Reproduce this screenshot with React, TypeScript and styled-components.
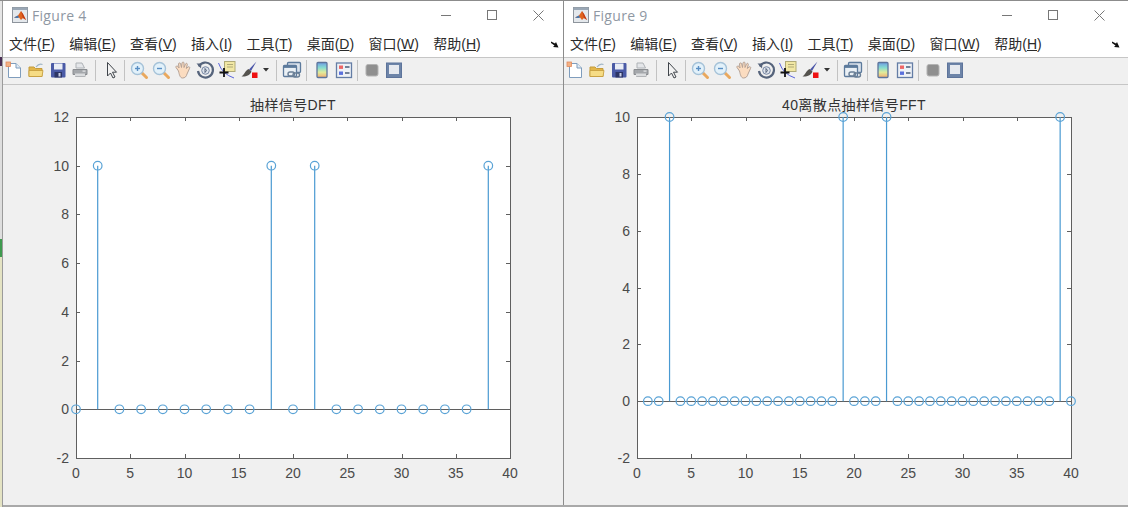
import React from 'react';
import styled, { createGlobalStyle } from 'styled-components';

const GlobalStyle = createGlobalStyle`
  html, body {
    margin: 0;
    padding: 0;
    background: #a9a9a9;
  }
`;

const MENU_ITEMS = [
  ['文件', 'F'],
  ['编辑', 'E'],
  ['查看', 'V'],
  ['插入', 'I'],
  ['工具', 'T'],
  ['桌面', 'D'],
  ['窗口', 'W'],
  ['帮助', 'H'],
];

const AXES = { left: 73, top: 32, width: 434, height: 341 };
const X_TICKS = [0, 5, 10, 15, 20, 25, 30, 35, 40];

const range = (from: number, to: number, step: number) => {
  const out: number[] = [];
  for (let i = from; i <= to; i += step) out.push(i);
  return out;
};

const Matlab = () => (
  <svg width="16" height="16" viewBox="0 0 16 16">
    <rect x="0.5" y="0.5" width="15" height="15" fill="#e4e8ec" stroke="#8d949c" />
    <rect x="0.5" y="0.5" width="15" height="2.5" fill="#9aa7b5" />
    <path d="M2 10.5 L6 8.5 L9 4 L11 7 L14 13 L11 11 L9 13 L7 10.5 L5 11 Z" fill="#e0641e" />
    <path d="M2 10.5 L6 8.5 L7 10.5 L5 11 Z" fill="#3b78b8" />
    <path d="M9 4 L11 7 L14 13 L11 11 Z" fill="#c43d14" />
  </svg>
);

const Icon = ({ children }: { children: React.ReactNode }) => (
  <svg width="20" height="20" viewBox="0 0 20 20">
    {children}
  </svg>
);

const NewFile = () => (
  <Icon>
    <path d="M4.5 3.5 H12 L16.5 8 V17.5 H4.5 Z" fill="#fff" stroke="#7f9dbd" />
    <path d="M12 3.5 V8 H16.5" fill="#dfeaf5" stroke="#7f9dbd" />
    <rect x="2" y="2" width="4.5" height="4.5" fill="#f3b184" stroke="#e08a5e" strokeWidth="0.8" />
  </Icon>
);

const OpenFolder = () => (
  <Icon>
    <path d="M3 7 H8 L9.5 8.5 H16 V16.5 H3 Z" fill="#e3b64a" stroke="#c49c3c" />
    <path d="M3 16.5 L3 10.5 H17 L16 16.5 Z" fill="#f6dc85" stroke="#c49c3c" strokeWidth="0.8" />
    <path d="M10 7 Q13 3 16.5 4.5" fill="none" stroke="#9fb5c6" strokeWidth="1.2" />
  </Icon>
);

const SaveDisk = () => (
  <Icon>
    <rect x="3" y="3" width="14.5" height="14.5" rx="1" fill="#4a5aa6" />
    <rect x="6" y="3.5" width="8.5" height="6" fill="#e9edf6" />
    <rect x="6.5" y="12" width="7.5" height="5.5" fill="#2c3566" />
    <rect x="10.5" y="13" width="2" height="3.5" fill="#c9cfe6" />
  </Icon>
);

const Printer = () => (
  <Icon>
    <path d="M6 3 H12 L14.5 8 H6 Z" fill="#e4e6e9" stroke="#aeb2b6" />
    <path d="M3 9.5 H17 V14.5 H15 V16.5 H5.5 V14.5 H3 Z" fill="#a4a7ab" stroke="#8a8d91" />
    <rect x="5" y="13.5" width="10" height="3" fill="#dadcde" />
    <rect x="12.5" y="10.5" width="3" height="1.2" fill="#e4e6e8" />
  </Icon>
);

const Pointer = () => (
  <Icon>
    <path d="M6.5 2.5 V16 L9.5 13 L12 18 L14 17 L11.5 12.2 H15.5 Z" fill="#f2f2f2" stroke="#3f444a" strokeLinejoin="round" />
  </Icon>
);

const Magnifier = ({ plus }: { plus?: boolean }) => (
  <Icon>
    <path d="M12.5 12.5 L17.5 17.5" stroke="#e9a85e" strokeWidth="3" strokeLinecap="round" />
    <circle cx="8.5" cy="8.5" r="6" fill="#e2f1fa" stroke="#a5c2d8" strokeWidth="1.4" />
    <path d="M6 8.5 H11" stroke="#5a8fc4" strokeWidth="1.4" />
    {plus && <path d="M8.5 6 V11" stroke="#5a8fc4" strokeWidth="1.4" />}
  </Icon>
);

const Hand = () => (
  <Icon>
    <path
      d="M5.5 11 L3 7.5 C2.5 6 4 5.5 5 6.5 L6 8 L5.5 4 C5.5 2.6 7.5 2.6 7.7 4 L8.5 7.5 L9 3 C9.2 1.7 11 1.8 11 3 L11 7.5 L12.5 4 C13 2.8 14.6 3.3 14.3 4.6 L13.3 8.5 L15 7 C16 6.2 17.2 7.2 16.6 8.3 L14 14 C13.4 16.5 12 18 9.5 18 C7 18 6.3 14.5 5.5 11 Z"
      fill="#fbdcc0"
      stroke="#b5a296"
    />
  </Icon>
);

const Rotate3d = () => (
  <Icon>
    <path d="M3.8 6.5 A7.5 7.5 0 1 1 3 11" fill="none" stroke="#56647c" strokeWidth="2.2" />
    <path d="M1.5 3.5 L6.5 3.5 L6 8.5 Z" fill="#56647c" />
    <circle cx="10.5" cy="10.5" r="3.8" fill="#dbe1ea" stroke="#7787a3" />
    <path d="M10 8.5 V12.5 M10 8.5 Q13 10.5 10 12.5" fill="none" stroke="#56647c" />
  </Icon>
);

const DataCursor = () => (
  <Icon>
    <path d="M1.5 3 Q5 14 17 18" fill="none" stroke="#5a64dc" />
    <rect x="7.5" y="1.5" width="10.5" height="10" fill="#f1e7a4" stroke="#b0aa78" />
    <path d="M10 4.5 H16 M10 7 H16" stroke="#b0aa78" />
    <path d="M7 8 V17 M2.5 12.5 H11.5" stroke="#111" strokeWidth="1.8" />
  </Icon>
);

const Brush = () => (
  <Icon>
    <path d="M17.5 1.5 L10 9.5 L12 11 Z" fill="#4a55a8" />
    <path d="M9.5 9 L12.5 11.5 C11.5 15 7 17 2.5 16.5 C5 15 6 11 9.5 9 Z" fill="#55534e" />
    <rect x="13" y="12.5" width="5.5" height="5.5" fill="#ee1111" />
  </Icon>
);

const Caret = () => (
  <svg width="6" height="4" viewBox="0 0 6 4">
    <path d="M0 0 H6 L3 3.5 Z" fill="#333" />
  </svg>
);

const LinkWindows = () => (
  <Icon>
    <rect x="5.5" y="2.5" width="13" height="10" rx="1" fill="#dbe3ec" stroke="#5c7a9c" strokeWidth="1.3" />
    <rect x="1.5" y="5.5" width="13" height="11" rx="1" fill="#eaf0f5" stroke="#5c7a9c" strokeWidth="1.3" />
    <rect x="1.5" y="5.5" width="13" height="2.4" fill="#5c7a9c" />
    <rect x="6" y="12" width="6.5" height="4" rx="2" fill="none" stroke="#6a7f96" strokeWidth="1.4" />
    <rect x="11" y="13" width="6.5" height="4" rx="2" fill="none" stroke="#6a7f96" strokeWidth="1.4" />
  </Icon>
);

const Colorbar = () => (
  <Icon>
    <defs>
      <linearGradient id="colorbar-fill" x1="0" y1="0" x2="0" y2="1">
        <stop offset="0" stopColor="#6f9de4" />
        <stop offset="0.35" stopColor="#86dccf" />
        <stop offset="0.65" stopColor="#dfec9c" />
        <stop offset="1" stopColor="#f5ae70" />
      </linearGradient>
    </defs>
    <rect x="5" y="2.5" width="10" height="15" rx="1" fill="url(#colorbar-fill)" stroke="#5d749b" strokeWidth="1.3" />
  </Icon>
);

const Legend = () => (
  <Icon>
    <rect x="2.5" y="3" width="15" height="14.5" fill="#eef1f6" stroke="#647da5" strokeWidth="1.3" />
    <rect x="5" y="5.5" width="4" height="3.4" fill="#ee6666" />
    <rect x="5" y="11.5" width="4" height="3.4" fill="#5a70dc" />
    <path d="M11 7 H15.5 M11 13 H15.5" stroke="#4c5e7a" strokeWidth="1.3" />
  </Icon>
);

const GreyBlock = () => (
  <Icon>
    <rect x="4" y="4.5" width="12" height="11.5" rx="2" fill="#8f8f8f" stroke="#b3b3b3" />
  </Icon>
);

const PaneFrame = () => (
  <Icon>
    <rect x="2.5" y="3" width="15" height="14.5" fill="#6d84a8" stroke="#5d749b" />
    <rect x="5" y="5" width="10" height="9" fill="#e6e9ef" />
  </Icon>
);

const StemPlot = ({ title, yMax, yTicks, xs, peaks }: {
  title: string;
  yMax: number;
  yTicks: number[];
  xs: number[];
  peaks: number[];
}) => {
  const { left, top, width, height } = AXES;
  const px = (x: number) => left + (x / 40) * width;
  const py = (y: number) => top + ((yMax - y) / (yMax + 2)) * height;
  const bottom = top + height;
  const right = left + width;
  return (
    <PlotSvg viewBox="0 0 560 420" width="560" height="420">
      <PlotTitle x={left + width / 2} y={top - 7}>{title}</PlotTitle>
      <rect x={left + 0.5} y={top + 0.5} width={width} height={height} fill="#fff" stroke="#5f5f5f" />
      {X_TICKS.map((t) => (
        <g key={t}>
          <path
            d={`M${Math.round(px(t)) + 0.5} ${bottom} v-4 M${Math.round(px(t)) + 0.5} ${top} v4`}
            stroke="#5f5f5f"
          />
          <TickLabel x={px(t)} y={bottom + 20} textAnchor="middle">{t}</TickLabel>
        </g>
      ))}
      {yTicks.map((t) => (
        <g key={t}>
          <path
            d={`M${left} ${Math.round(py(t)) + 0.5} h4 M${right} ${Math.round(py(t)) + 0.5} h-4`}
            stroke="#5f5f5f"
          />
          <TickLabel x={left - 7} y={py(t) + 5} textAnchor="end">{t}</TickLabel>
        </g>
      ))}
      <path d={`M${left} ${Math.round(py(0)) + 0.5} H${right}`} stroke="#5f5f5f" />
      {xs.map((x) => {
        const y = peaks.includes(x) ? 10 : 0;
        return (
          <g key={x}>
            {y > 0 && (
              <path
                d={`M${px(x)} ${py(0)} V${py(y)}`}
                stroke="#4a9ad2"
                strokeWidth="1.2"
              />
            )}
            <circle cx={px(x)} cy={py(y)} r="4.3" fill="none" stroke="#5aa3d6" strokeWidth="1.2" />
          </g>
        );
      })}
    </PlotSvg>
  );
};

const FigureWindow = ({ name, children }: { name: string; children: React.ReactNode }) => (
  <Window>
    <TitleBar>
      <TitleIcon><Matlab /></TitleIcon>
      <TitleText>{name}</TitleText>
      <WindowButton>
        <svg width="10" height="10" viewBox="0 0 10 10"><path d="M0 5.5 H10" stroke="#777" /></svg>
      </WindowButton>
      <WindowButton>
        <svg width="10" height="10" viewBox="0 0 10 10"><rect x="0.5" y="0.5" width="9" height="9" fill="none" stroke="#777" /></svg>
      </WindowButton>
      <WindowButton>
        <svg width="11" height="11" viewBox="0 0 11 11"><path d="M0.5 0.5 L10.5 10.5 M10.5 0.5 L0.5 10.5" stroke="#777" /></svg>
      </WindowButton>
    </TitleBar>
    <MenuBar>
      {MENU_ITEMS.map(([label, key]) => (
        <MenuItem key={key}>
          {label}(<u>{key}</u>)
        </MenuItem>
      ))}
      <DockArrow>
        <svg width="8" height="7" viewBox="0 0 8 7">
          <path d="M0 0.5 L4 2.5 L5 1 L7.5 6.5 L2 6 L3.5 4.5 L0 2 Z" fill="#111" />
        </svg>
      </DockArrow>
    </MenuBar>
    <ToolBar>
      <ToolButton><NewFile /></ToolButton>
      <ToolButton><OpenFolder /></ToolButton>
      <ToolButton><SaveDisk /></ToolButton>
      <ToolButton><Printer /></ToolButton>
      <Separator $before={4} $after={4} />
      <ToolButton><Pointer /></ToolButton>
      <Separator $before={2} $after={3} />
      <ToolButton><Magnifier plus /></ToolButton>
      <ToolButton><Magnifier /></ToolButton>
      <ToolButton><Hand /></ToolButton>
      <ToolButton><Rotate3d /></ToolButton>
      <ToolButton><DataCursor /></ToolButton>
      <ToolButton><Brush /></ToolButton>
      <CaretButton><Caret /></CaretButton>
      <Separator $before={4} $after={4} />
      <ToolButton><LinkWindows /></ToolButton>
      <Separator $before={3} $after={4} />
      <ToolButton><Colorbar /></ToolButton>
      <ToolButton><Legend /></ToolButton>
      <Separator $before={2} $after={3} />
      <ToolButton><GreyBlock /></ToolButton>
      <ToolButton><PaneFrame /></ToolButton>
    </ToolBar>
    <Canvas>{children}</Canvas>
  </Window>
);

const App = () => (
  <>
    <GlobalStyle />
    <Page>
      <BackEdge />
      <FigureWindow name="Figure 4">
        <StemPlot
          title="抽样信号DFT"
          yMax={12}
          yTicks={[-2, 0, 2, 4, 6, 8, 10, 12]}
          xs={range(0, 38, 2)}
          peaks={[2, 18, 22, 38]}
        />
      </FigureWindow>
      <FigureWindow name="Figure 9">
        <StemPlot
          title="40离散点抽样信号FFT"
          yMax={10}
          yTicks={[-2, 0, 2, 4, 6, 8, 10]}
          xs={range(1, 40, 1)}
          peaks={[3, 19, 23, 39]}
        />
      </FigureWindow>
    </Page>
  </>
);

const Page = styled.div`
  display: flex;
  width: 1128px;
  height: 507px;
  overflow: hidden;
  padding-bottom: 2px;
  box-sizing: border-box;
  border-top: 1px solid #8c8c8c;
  font-family: "Liberation Sans", "Noto Sans CJK SC", sans-serif;
`;

const BackEdge = styled.div`
  width: 2px;
  margin-bottom: -2px;
  border-right: 1px solid #9b9b9b;
  background: linear-gradient(
    #e6e6e6 0 56px,
    #4a2f55 56px 65px,
    #dedede 65px 238px,
    #3f9a4f 238px 256px,
    #e4e3c3 256px
  );
`;

const Window = styled.div`
  flex: 0 0 561px;
  box-sizing: border-box;
  display: flex;
  flex-direction: column;
  min-width: 0;
  background: #f0f0f0;
  border-right: 1px solid #8c8c8c;

  &:last-child {
    flex: 1 1 0;
    border-right: 0;
  }
`;

const TitleBar = styled.div`
  display: flex;
  align-items: center;
  height: 30px;
  box-sizing: border-box;
  padding: 0 0 2px 9px;
  background: #fff;
`;

const TitleIcon = styled.span`
  display: flex;
  width: 20px;
`;

const TitleText = styled.span`
  width: 391px;
  font-family: "Open Sans", sans-serif;
  font-size: 14px;
  letter-spacing: 0.3px;
  color: #8f98a3;
`;

const WindowButton = styled.span`
  display: flex;
  justify-content: center;
  width: 46px;
`;

const MenuBar = styled.div`
  position: relative;
  display: flex;
  align-items: center;
  gap: 14.25px;
  height: 27px;
  box-sizing: border-box;
  padding: 0 0 2px 6px;
  background: #fff;
  border-bottom: 1px solid #c6c6c6;
`;

const MenuItem = styled.span`
  font-size: 14px;
  color: #2b2b2b;
  white-space: nowrap;
`;

const DockArrow = styled.span`
  position: absolute;
  left: 548px;
  top: 10px;
  display: flex;
`;

const ToolBar = styled.div`
  display: flex;
  align-items: center;
  height: 27px;
  box-sizing: border-box;
  padding-bottom: 2px;
  background: #f0f0f0;
  border-bottom: 1px solid #c6c6c6;
`;

const ToolButton = styled.span`
  display: flex;
  align-items: center;
  justify-content: center;
  width: 22px;
  height: 24px;
`;

const CaretButton = styled.span`
  display: flex;
  align-items: center;
  justify-content: center;
  width: 12px;
`;

const Separator = styled.span<{ $before: number; $after: number }>`
  width: 1px;
  height: 21px;
  background: #c2c2c2;
  margin-left: ${(p) => p.$before}px;
  margin-right: ${(p) => p.$after}px;
`;

const Canvas = styled.div`
  flex: 1;
  background: #f0f0f0;
`;

const PlotSvg = styled.svg`
  display: block;
`;

const PlotTitle = styled.text`
  font-family: "Liberation Sans", "Noto Sans CJK SC", sans-serif;
  font-size: 14px;
  letter-spacing: 0.4px;
  fill: #333;
  text-anchor: middle;
`;

const TickLabel = styled.text`
  font-family: "Liberation Sans", sans-serif;
  font-size: 14px;
  fill: #4a4a4a;
`;

export default App;
